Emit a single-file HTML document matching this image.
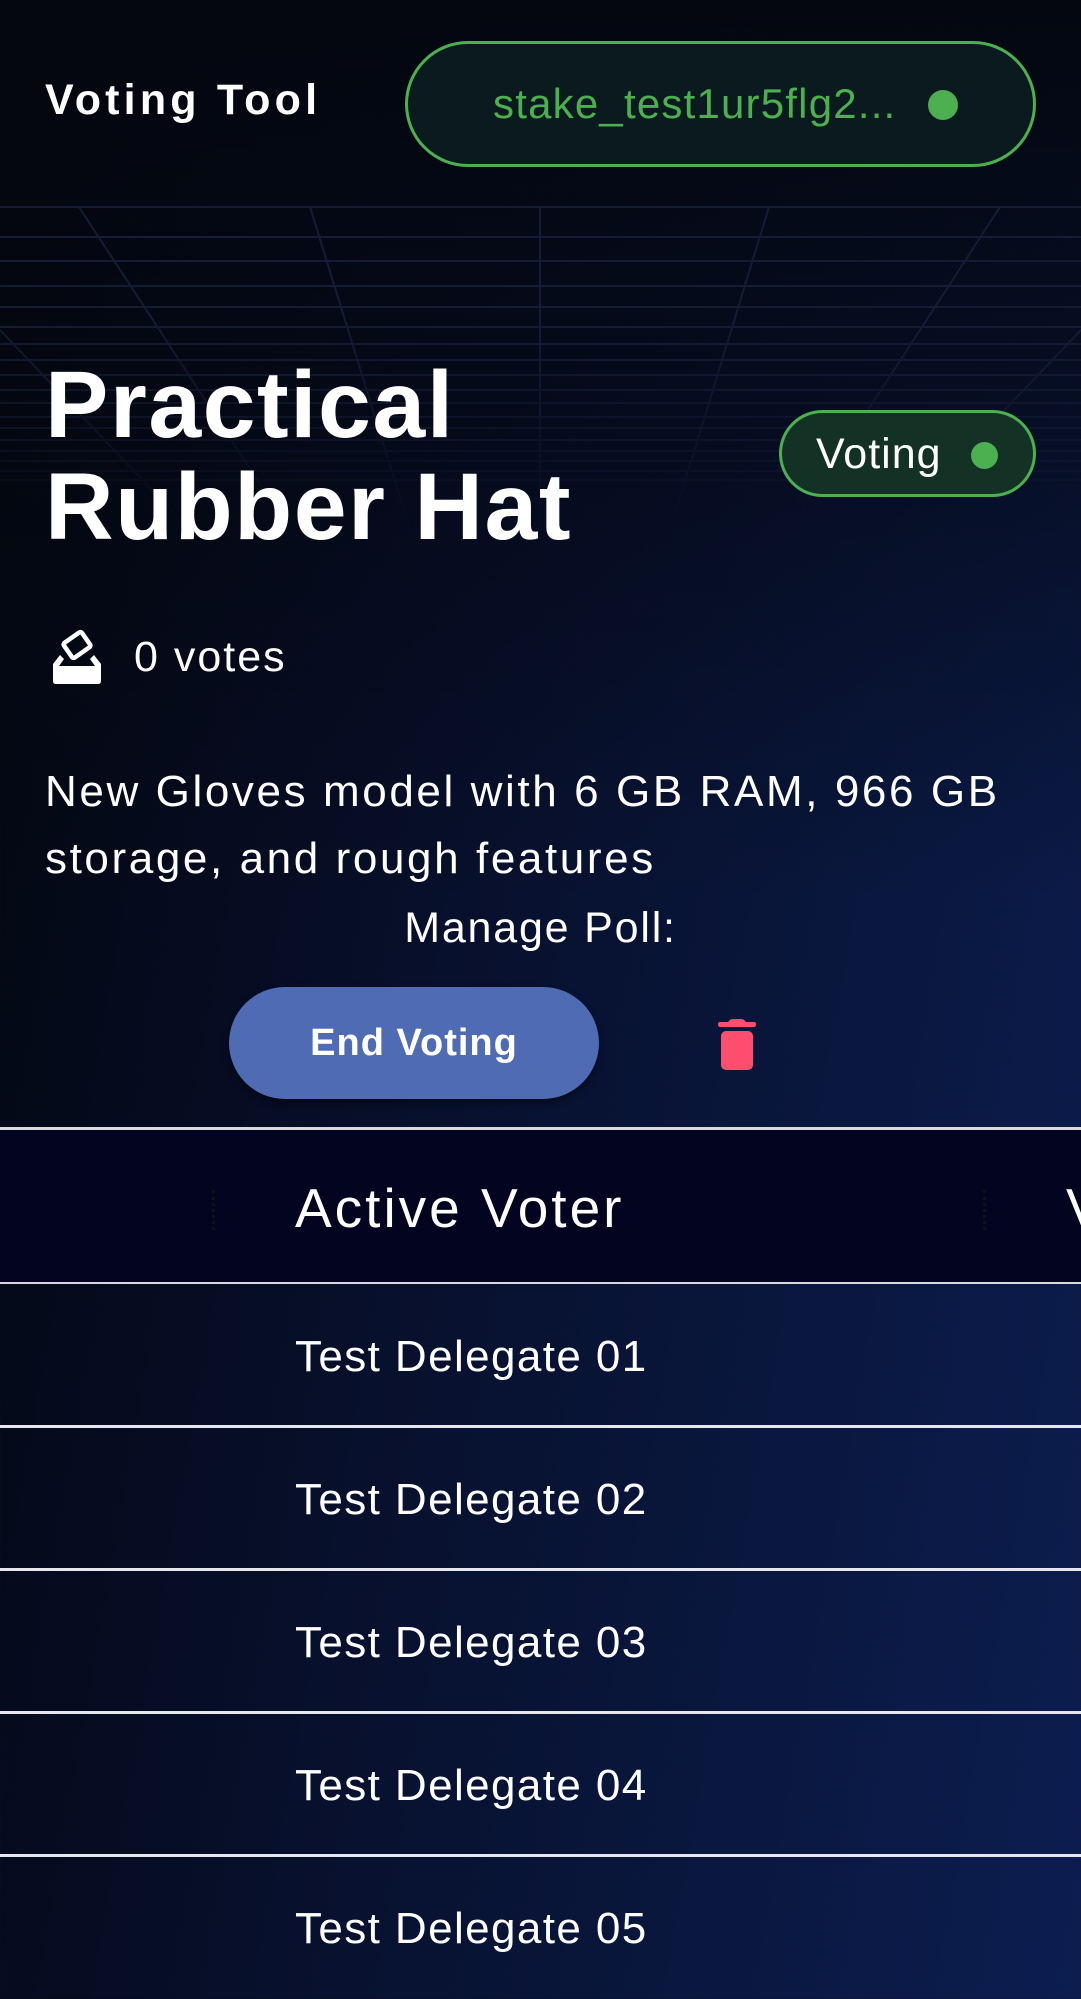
<!DOCTYPE html>
<html><head><meta charset="utf-8"><style>
*{margin:0;padding:0;box-sizing:border-box}
html,body{width:1081px;height:1999px;overflow:hidden}
body{font-family:"Liberation Sans",sans-serif;color:#fff;position:relative;
background:linear-gradient(to bottom,rgba(4,7,16,1) 0,rgba(4,7,16,.6) 20%,rgba(4,7,16,0) 45%),linear-gradient(100deg,#03060d 0%,#070f2a 40%,#0a1840 75%,#0c1d50 100%);}
.abs{position:absolute}
.brand{left:45px;top:74px;font-size:43px;font-weight:bold;letter-spacing:4.2px;line-height:52px}
.wallet{left:405px;top:41px;width:631px;height:126px;border:3px solid #4caf50;border-radius:63px;background:#0b1a1e}
.wallet span{position:absolute;left:85px;top:36px;font-size:42px;color:#4caf50;letter-spacing:1.2px;line-height:48px;white-space:nowrap}
.dot{position:absolute;border-radius:50%;background:#4caf50}
.title{left:45px;top:354px;font-size:95px;font-weight:bold;line-height:102px;letter-spacing:1.5px}
.badge{left:779px;top:410px;width:257px;height:87px;border:3px solid #4caf50;border-radius:44px;background:#133124}
.badge span{position:absolute;left:34px;top:18px;font-size:43px;line-height:46px;letter-spacing:1px}
.votes{left:134px;top:633px;font-size:43px;line-height:48px;letter-spacing:2px}
.desc{left:45px;top:758px;font-size:44px;line-height:67px;letter-spacing:2.6px;white-space:nowrap}
.manage{left:0;width:1081px;top:903px;text-align:center;font-size:43px;line-height:50px;letter-spacing:1.8px}
.btn{left:229px;top:987px;width:370px;height:112px;border-radius:56px;background:#4e6bb3;text-align:center;font-weight:bold;font-size:38px;line-height:112px;letter-spacing:1px;box-shadow:0 4px 8px rgba(0,0,0,.4)}
.thead{left:0;top:1127px;width:1081px;height:157px;background:#020420;border-top:3px solid #d8d8e0;border-bottom:2px solid #d8d8e0}
.thead span{position:absolute;left:295px;top:47px;font-size:55px;line-height:62px;letter-spacing:3px}
.sep{position:absolute;top:60px;width:3px;height:40px;border-left:3px dotted #111}
.row{left:0;width:1081px;height:143px;border-bottom:3px solid #e6e6ee}
.row span{position:absolute;left:295px;top:47px;font-size:44px;line-height:50px;letter-spacing:1.4px}
</style></head><body>
<svg class="abs" style="left:0;top:0" width="1081" height="540">
<defs><linearGradient id="f" x1="0" y1="0" x2="0" y2="1"><stop offset="0.35" stop-color="#fff" stop-opacity="1"/><stop offset="1" stop-color="#fff" stop-opacity="0"/></linearGradient>
<mask id="m"><rect x="0" y="200" width="1081" height="340" fill="url(#f)"/></mask></defs>
<g stroke="#151c36" stroke-width="2" fill="none" mask="url(#m)">
<line x1="0" y1="207" x2="1081" y2="207"/>
<line x1="0" y1="237" x2="1081" y2="237"/>
<line x1="0" y1="261" x2="1081" y2="261"/>
<line x1="0" y1="286" x2="1081" y2="286"/>
<line x1="0" y1="307" x2="1081" y2="307"/>
<line x1="0" y1="327" x2="1081" y2="327"/>
<line x1="0" y1="344" x2="1081" y2="344"/>
<line x1="0" y1="360" x2="1081" y2="360"/>
<line x1="0" y1="375" x2="1081" y2="375"/>
<line x1="0" y1="390" x2="1081" y2="390"/>
<line x1="0" y1="403" x2="1081" y2="403"/>
<line x1="0" y1="417" x2="1081" y2="417"/>
<line x1="0" y1="428" x2="1081" y2="428"/>
<line x1="0" y1="440" x2="1081" y2="440"/>
<line x1="0" y1="451" x2="1081" y2="451"/>
<line x1="0" y1="461" x2="1081" y2="461"/>
<line x1="0" y1="471" x2="1081" y2="471"/>
<line x1="0" y1="480" x2="1081" y2="480"/>
<line x1="79" y1="207" x2="290" y2="530"/>
<line x1="310" y1="207" x2="410" y2="530"/>
<line x1="540" y1="207" x2="540" y2="530"/>
<line x1="769" y1="207" x2="670" y2="530"/>
<line x1="1000" y1="207" x2="790" y2="530"/>
<line x1="0" y1="330" x2="190" y2="530"/>
<line x1="1081" y1="330" x2="890" y2="530"/>
</g></svg>
<div class="abs brand">Voting Tool</div>
<div class="abs wallet"><span>stake_test1ur5flg2...</span><div class="dot" style="left:520px;top:46px;width:30px;height:30px"></div></div>
<div class="abs title">Practical<br>Rubber Hat</div>
<div class="abs badge"><span>Voting</span><div class="dot" style="left:189px;top:29px;width:27px;height:27px"></div></div>
<svg class="abs" style="left:50px;top:628px" width="56" height="60" viewBox="0 0 56 60">
<rect x="16" y="8" width="22" height="18" rx="2" transform="rotate(-35 27 17)" fill="none" stroke="#fff" stroke-width="4.5"/>
<path d="M10 27 L3 36 L3 53 Q3 56 6 56 L48 56 Q51 56 51 53 L51 36 L44 27 L40 31 L45 38 L9 38 L14 31 Z" fill="#fff"/>
</svg>
<div class="abs votes">0 votes</div>
<div class="abs desc">New Gloves model with 6 GB RAM, 966 GB<br>storage, and rough features</div>
<div class="abs manage">Manage Poll:</div>
<div class="abs btn">End Voting</div>
<svg class="abs" style="left:716px;top:1018px" width="42" height="54" viewBox="0 0 42 54">
<path d="M12 4 Q14 1 17 1 L25 1 Q28 1 30 4 L38 4 Q40 4 40 6 Q40 9 38 9 L4 9 Q2 9 2 6 Q2 4 4 4 Z" fill="#ff4d6d"/>
<rect x="5" y="13" width="32" height="39" rx="5" fill="#ff4d6d"/>
</svg>
<div class="abs thead"><div class="sep" style="left:212px"></div><span>Active Voter</span><div class="sep" style="left:983px"></div><span style="left:1066px">V</span></div>
<div class="abs row" style="top:1285px"><span>Test Delegate 01</span></div>
<div class="abs row" style="top:1428px"><span>Test Delegate 02</span></div>
<div class="abs row" style="top:1571px"><span>Test Delegate 03</span></div>
<div class="abs row" style="top:1714px"><span>Test Delegate 04</span></div>
<div class="abs row" style="top:1857px;border-bottom:none"><span>Test Delegate 05</span></div>
</body></html>
